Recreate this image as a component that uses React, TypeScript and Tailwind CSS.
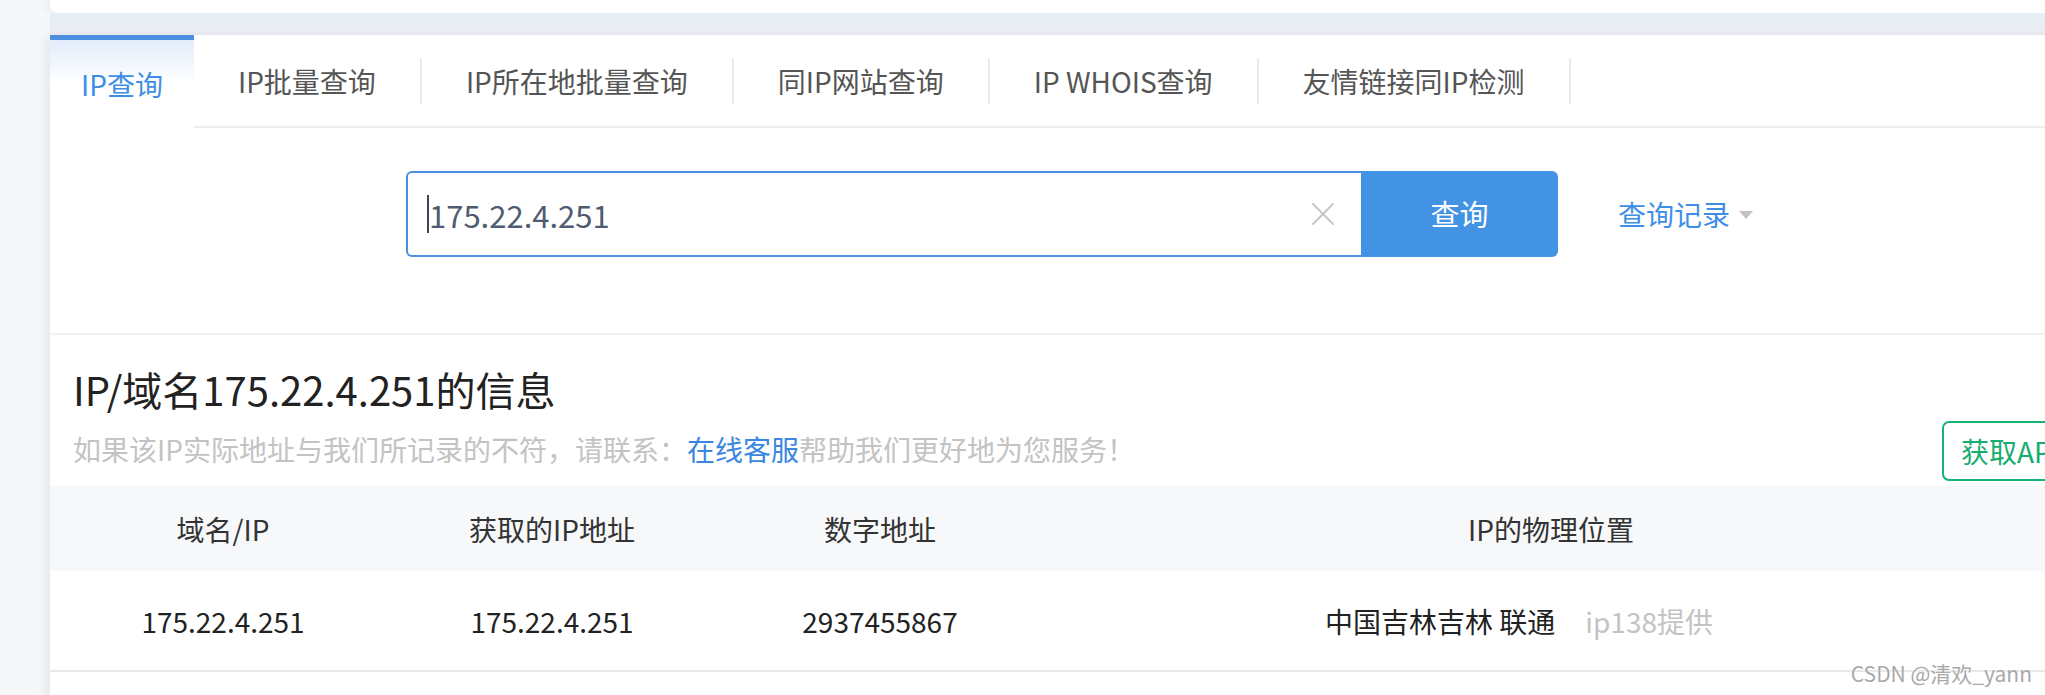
import React from 'react';
import { X } from 'lucide-react';

const TABS = ['IP批量查询', 'IP所在地批量查询', '同IP网站查询', 'IP WHOIS查询', '友情链接同IP检测'];

const font = "font-['Noto_Sans_CJK_SC','Noto_Sans',sans-serif]";

export default function App() {
  return (
    <div className={`relative w-[2045px] h-[695px] overflow-hidden bg-[#f6f7f9] ${font}`}>
      <div className="flex">
        {/* left margin */}
        <div className="w-[50px] shrink-0" />

        <div className="w-[2100px] shrink-0 flex flex-col">
          {/* previous card bottom */}
          <div className="h-[13px] bg-white rounded-b-[8px] shadow-[-4px_0_8px_rgba(0,0,0,0.05)]" />
          <div className="h-[22px] bg-gradient-to-b from-[#e7eef7] to-[#eceef2]" />

          {/* main card */}
          <div className="bg-white shadow-[-5px_0_10px_rgba(0,0,0,0.06)]">
            {/* tabs */}
            <div className="flex items-stretch h-[93px] border-b-2 border-[#eeeeee]">
              <div className="flex items-center px-[31px] border-t-[5px] border-[#4a8fe0] bg-gradient-to-b from-[#e2ecfa] via-white to-white text-[28px] text-[#3f8ee5] -mb-[2px]">
                IP查询
              </div>
              {TABS.map(t => (
                <div key={t} className="flex items-center">
                  <span className="px-[44px] text-[28px] text-[#555555]">{t}</span>
                  <span className="w-[2px] h-[46px] bg-[#ebebeb]" />
                </div>
              ))}
            </div>

            {/* search */}
            <div className="flex items-center pl-[356px] pt-[43px] pb-[76px] border-b-2 border-[#f2f2f2]">
              <div className="flex items-center w-[955px] h-[86px] border-2 border-r-0 border-[#4a8fe0] rounded-l-[6px] pl-[19px] pr-[18px]">
                <span className="w-[2px] h-[38px] bg-[#3c4658]" />
                <span className="flex-1 text-[31px] text-[#4f5b70] leading-none">175.22.4.251</span>
                <X className="w-[40px] h-[40px] text-[#c6c6c6]" strokeWidth={1.2} />
              </div>
              <button className="w-[197px] h-[86px] bg-[#4393e5] rounded-r-[6px] text-white text-[29px]">
                查询
              </button>
              <div className="flex items-center ml-[60px] text-[28px] text-[#3f8ee5]">
                查询记录
                <span className="ml-[9px] mt-[2px] w-0 h-0 border-l-[7px] border-r-[7px] border-t-[8px] border-l-transparent border-r-transparent border-t-[#c2c2c2]" />
              </div>
            </div>

            {/* info heading */}
            <div className="flex items-start pl-[23px] pt-[28px] pb-[5px]">
              <div className="w-[1869px] shrink-0">
                <h2 className="text-[40px] leading-[52px] text-[#222222]">IP/域名175.22.4.251的信息</h2>
                <p className="mt-[14px] text-[28px] leading-[40px] text-[#c3c3c3]">
                  如果该IP实际地址与我们所记录的不符，请联系：<span className="text-[#3a86e0]">在线客服</span>帮助我们更好地为您服务！
                </p>
              </div>
              <div className="mt-[58px] h-[60px] px-[17px] flex items-center border-2 border-[#17b374] rounded-[7px] text-[28px] text-[#17ad70] whitespace-nowrap">
                获取API接口
              </div>
            </div>

            {/* table */}
            <div className="grid grid-cols-[346px_312px_344px_998px] bg-[#f7f8fa] h-[85px] items-center text-[28px] text-[#333333] text-center">
              <div>域名/IP</div>
              <div>获取的IP地址</div>
              <div>数字地址</div>
              <div>IP的物理位置</div>
            </div>
            <div className="grid grid-cols-[346px_312px_344px_998px] h-[101px] items-center text-[28px] text-[#222222] text-center border-b-2 border-[#e8e8e8]">
              <div>175.22.4.251</div>
              <div>175.22.4.251</div>
              <div>2937455867</div>
              <div className="pr-[64px]">
                中国吉林吉林 联通<span className="ml-[30px] text-[#c3c3c3]">ip138提供</span>
              </div>
            </div>
            <div className="h-[40px]" />
          </div>
        </div>
      </div>

      {/* watermark */}
      <div className="absolute right-[13px] bottom-[6px] text-[21px] text-[#a8a8a8] [text-shadow:0_0_2px_#fff]">
        CSDN @清欢_yann
      </div>
    </div>
  );
}
